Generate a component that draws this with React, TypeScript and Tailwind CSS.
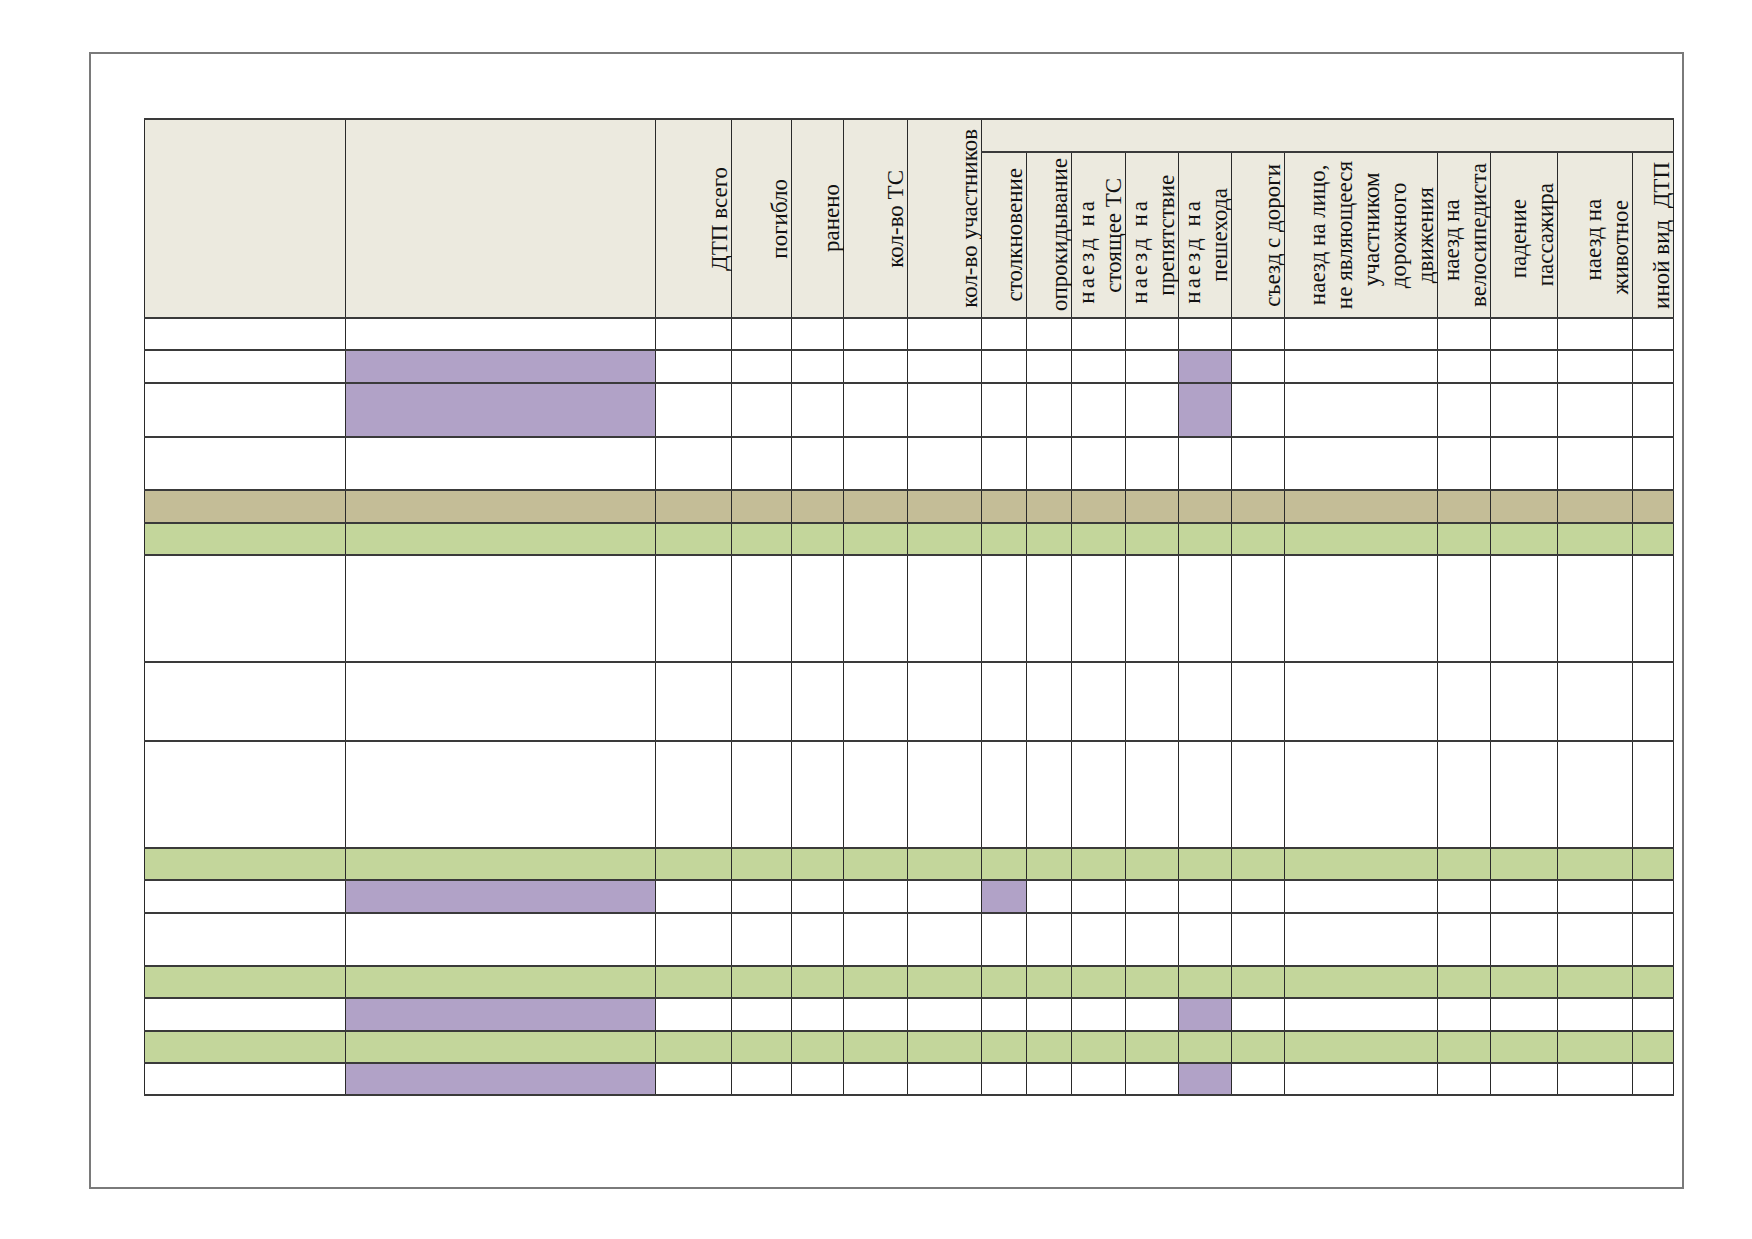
import React from "react";

type Line = { t: string; cls?: string };

const widths = [201, 310, 76, 60, 52, 64, 74, 45, 45, 54, 53, 53, 53, 153, 53, 67, 75, 41];
const colCls = [
  "w-[201px]", "w-[310px]", "w-[76px]", "w-[60px]", "w-[52px]", "w-[64px]", "w-[74px]",
  "w-[45px]", "w-[45px]", "w-[54px]", "w-[53px]", "w-[53px]", "w-[53px]", "w-[153px]",
  "w-[53px]", "w-[67px]", "w-[75px]", "w-[41px]",
];

const mainHeads: Line[][] = [
  [],
  [],
  [{ t: "ДТП всего" }],
  [{ t: "погибло" }],
  [{ t: "ранено" }],
  [{ t: "кол-во ТС" }],
  [{ t: "кол-во участников" }],
];

const subHeads: Line[][] = [
  [{ t: "столкновение" }],
  [{ t: "опрокидывание" }],
  [{ t: "наезд на", cls: "pe-[32px] tracking-[3px]" }, { t: "стоящее ТС" }],
  [{ t: "наезд на", cls: "pe-[32px] tracking-[3px]" }, { t: "препятствие" }],
  [{ t: "наезд на", cls: "pe-[32px] tracking-[3px]" }, { t: "пешехода" }],
  [{ t: "съезд с дороги" }],
  [
    { t: "наезд на лицо," },
    { t: "не являющееся" },
    { t: "участником", cls: "ps-[12px]" },
    { t: "дорожного" },
    { t: "движения" },
  ],
  [{ t: "наезд на", cls: "pe-[10px]" }, { t: "велосипедиста" }],
  [{ t: "падение", cls: "pe-[8px]" }, { t: "пассажира" }],
  [{ t: "наезд на", cls: "pe-[8px]" }, { t: "животное", cls: "pe-[24px]" }],
  [{ t: "иной вид\u00a0 ДТП" }],
];

type Row = { h: string; kind: "white" | "tan" | "green" | "purple"; mark?: number };

const rows: Row[] = [
  { h: "h-[32px]", kind: "white" },
  { h: "h-[33px]", kind: "purple", mark: 11 },
  { h: "h-[54px]", kind: "purple", mark: 11 },
  { h: "h-[53px]", kind: "white" },
  { h: "h-[33px]", kind: "tan" },
  { h: "h-[32px]", kind: "green" },
  { h: "h-[107px]", kind: "white" },
  { h: "h-[79px]", kind: "white" },
  { h: "h-[107px]", kind: "white" },
  { h: "h-[32px]", kind: "green" },
  { h: "h-[33px]", kind: "purple", mark: 7 },
  { h: "h-[53px]", kind: "white" },
  { h: "h-[32px]", kind: "green" },
  { h: "h-[33px]", kind: "purple", mark: 11 },
  { h: "h-[32px]", kind: "green" },
  { h: "h-[32px]", kind: "purple", mark: 11 },
];

function VText({ lines }: { lines: Line[] }) {
  if (lines.length === 0) return null;
  return (
    <div className="flex justify-end">
      <div className="[writing-mode:vertical-rl] rotate-180 text-center whitespace-nowrap mr-[-2px]">
        {lines.map((l, i) => (
          <div key={i} className={l.cls ?? ""}>
            {l.t}
          </div>
        ))}
      </div>
    </div>
  );
}

const cellBorder = "border-x border-x-[#2a2a2a] border-y-2 border-y-[#3a3a3a]";

function cellBg(r: Row, c: number): string {
  if (r.kind === "tan") return "bg-[#c4bd97]";
  if (r.kind === "green") return "bg-[#c3d69b]";
  if (r.kind === "purple" && (c === 1 || c === r.mark)) return "bg-[#b1a2c7]";
  return "bg-white";
}

export default function App() {
  return (
    <div className="w-[1752px] h-[1239px] bg-white pt-[52px] pl-[89px] font-['Liberation_Serif',serif] text-[#111]">
      <div className="w-[1595px] h-[1137px] border-2 border-[#7a7a7a] pt-[64px] pl-[53px]">
        <table className="table-fixed border-collapse w-[1529px] text-[23px] leading-[27px] font-normal">
          <colgroup>
            {widths.map((_, i) => (
              <col key={i} className={colCls[i]} />
            ))}
          </colgroup>
          <thead>
            <tr className="h-[33px]">
              {mainHeads.map((lines, i) => (
                <th
                  key={i}
                  rowSpan={2}
                  className={`p-0 align-middle font-normal bg-[#eceadf] ${cellBorder}`}
                >
                  <VText lines={lines} />
                </th>
              ))}
              <th colSpan={11} className={`p-0 bg-[#eceadf] ${cellBorder}`}></th>
            </tr>
            <tr className="h-[166px]">
              {subHeads.map((lines, i) => (
                <th
                  key={i}
                  className={`p-0 align-middle font-normal bg-[#eceadf] ${cellBorder}`}
                >
                  <VText lines={lines} />
                </th>
              ))}
            </tr>
          </thead>
          <tbody>
            {rows.map((r, ri) => (
              <tr key={ri} className={r.h}>
                {widths.map((_, ci) => (
                  <td key={ci} className={`p-0 ${cellBg(r, ci)} ${cellBorder}`}></td>
                ))}
              </tr>
            ))}
          </tbody>
        </table>
      </div>
    </div>
  );
}
